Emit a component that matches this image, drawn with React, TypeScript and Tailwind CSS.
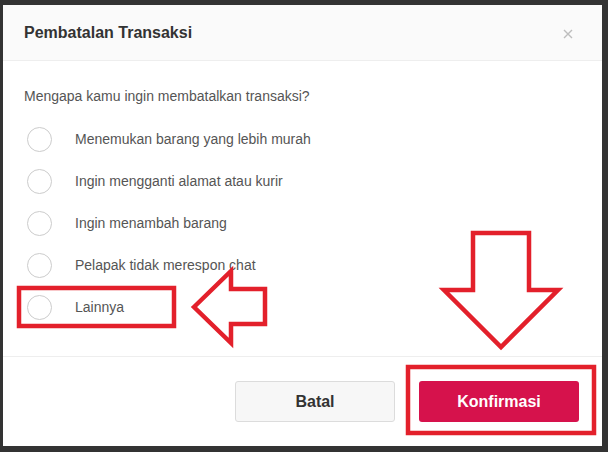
const reasons = [
  "Menemukan barang yang lebih murah",
  "Ingin mengganti alamat atau kurir",
  "Ingin menambah barang",
  "Pelapak tidak merespon chat",
  "Lainnya",
];

function Annotations() {
  return (
    <svg
      className="pointer-events-none absolute inset-0"
      width="608"
      height="452"
      viewBox="0 0 608 452"
      fill="none"
    >
      <g stroke="#e3202b" strokeWidth="4.5" strokeLinejoin="miter">
        <rect x="19" y="288" width="155" height="38" />
        <rect x="408" y="367" width="186" height="66" />
        <polygon points="194,307 231,271 231,289 265,289 265,324 231,324 231,343" />
        <polygon points="473,233 529,233 529,290 558,290 501,347 444,290 473,290" />
      </g>
    </svg>
  );
}

export default function App() {
  return (
    <div className="relative h-[452px] w-[608px] overflow-hidden bg-[#333333] pb-[6px] pl-[3px] pr-[6px] pt-[5px] font-['Liberation_Sans',Arial,sans-serif]">
      <div className="flex h-full flex-col bg-white">
        <div className="flex h-[56px] items-center justify-between border-b border-[#eeeeee] bg-[#fafafa] pl-[21px] pr-[29px]">
          <h2 className="text-[16px] font-bold text-[#333333]">Pembatalan Transaksi</h2>
          <svg width="10" height="10" viewBox="0 0 10 10" className="mt-[2px]">
            <path d="M1 1L9 9M9 1L1 9" stroke="#bdbdbd" strokeWidth="1.4" />
          </svg>
        </div>

        <div className="flex-1 px-[21px] pt-[25px]">
          <p className="text-[14px] leading-[20px] text-[#555555]">
            Mengapa kamu ingin membatalkan transaksi?
          </p>
          <ul className="mt-[12px] pl-[3px]">
            {reasons.map((r) => (
              <li key={r} className="flex h-[42px] items-center gap-[23px]">
                <span className="h-[25px] w-[25px] shrink-0 rounded-full border border-[#cccccc] bg-white" />
                <span className="text-[14px] text-[#555555]">{r}</span>
              </li>
            ))}
          </ul>
        </div>

        <div className="flex h-[90px] items-center justify-end gap-[24px] border-t border-[#eeeeee] pr-[23px]">
          <button className="h-[41px] w-[160px] rounded-[3px] border border-[#dcdcdc] bg-[#f7f7f7] text-[16px] font-bold text-[#333333]">
            Batal
          </button>
          <button className="h-[41px] w-[160px] rounded-[3px] bg-[#d6124c] text-[16px] font-bold text-white">
            Konfirmasi
          </button>
        </div>
      </div>
      <Annotations />
    </div>
  );
}
